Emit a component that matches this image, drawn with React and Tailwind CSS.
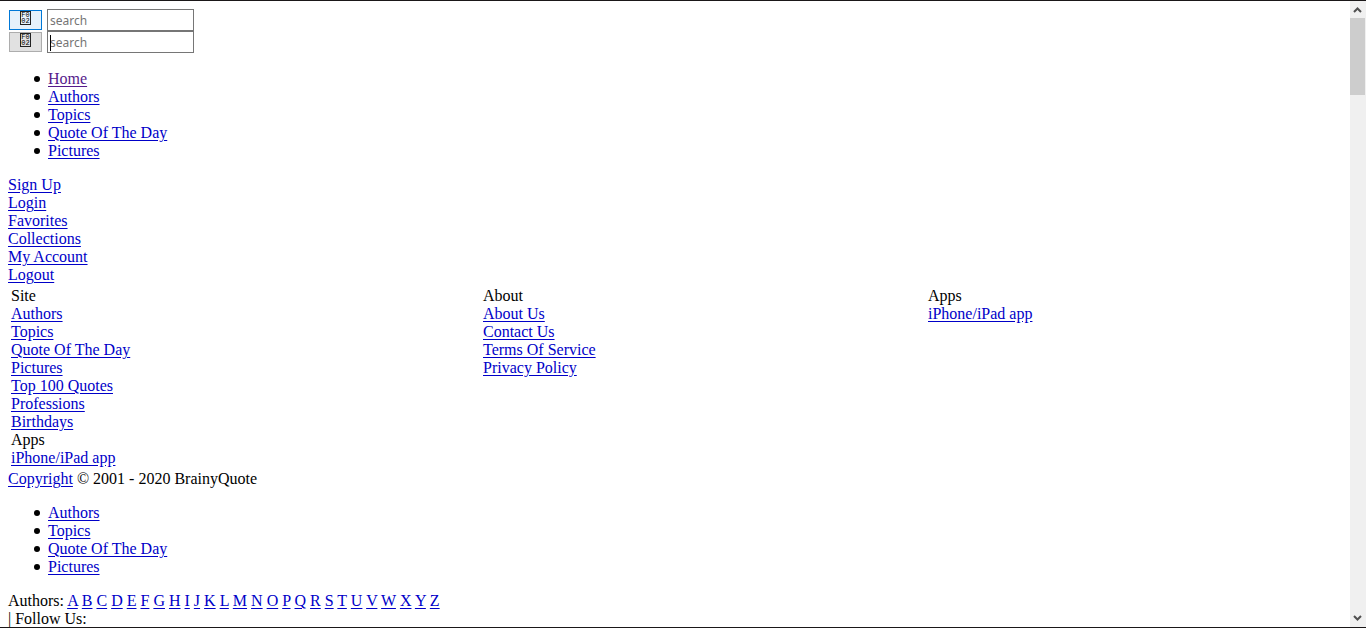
const LINK = "text-[#0000c8] underline underline-offset-2";

function Link({ children, visited }) {
  return (
    <a href="#" className={visited ? "text-[#551a8b] underline underline-offset-2" : LINK}>
      {children}
    </a>
  );
}

function BulletList({ items, visited }) {
  return (
    <ul className="my-4 pl-[26px]">
      {items.map((item) => (
        <li
          key={item}
          className="flex items-center gap-2 before:size-[6px] before:rounded-full before:bg-black before:content-['']"
        >
          <Link visited={item === visited}>{item}</Link>
        </li>
      ))}
    </ul>
  );
}

function LinkLines({ items }) {
  return items.map((item) => (
    <div key={item}>
      <Link>{item}</Link>
    </div>
  ));
}

function MissingGlyph() {
  return (
    <span className="mb-1 flex h-[14px] w-[11px] flex-col items-center justify-center border border-[#222] font-['Liberation_Mono',monospace] text-[7px] leading-[6px] text-black">
      <span>F0</span>
      <span>02</span>
    </span>
  );
}

function SearchRow({ id, active, caret }) {
  return (
    <form className="flex h-[22px] items-center gap-[5px] pl-px" onSubmit={(e) => e.preventDefault()}>
      <button
        type="submit"
        aria-label="Search"
        className={
          active
            ? "flex h-5 w-[33px] items-center justify-center border border-[#0078d7] bg-[#e5f1fb]"
            : "flex h-5 w-[33px] items-center justify-center border border-[#adadad] bg-[#e1e1e1]"
        }
      >
        <MissingGlyph />
      </button>
      <div className="relative">
        <input
          id={id}
          type="text"
          aria-label="search"
          placeholder="search"
          className="block h-[22px] w-[147px] border border-[#767676] bg-white px-0.5 font-['Noto_Sans','Open_Sans',sans-serif] text-[12px] leading-4 outline-none placeholder:text-[#757575]"
        />
        {caret && <span className="absolute top-1 left-[3px] h-4 w-px bg-black" />}
      </div>
    </form>
  );
}

function ScrollBar() {
  return (
    <div className="flex w-4 shrink-0 flex-col bg-[#f0f0f0]" aria-hidden="true">
      <svg className="h-[17px] w-4" viewBox="0 0 16 17" fill="none" stroke="#505050" strokeWidth="2">
        <path d="M4 11 L7.5 7.5 L11 11" />
      </svg>
      <div className="mr-px h-[77px] bg-[#cdcdcd]" />
      <div className="grow" />
      <svg className="h-[17px] w-4" viewBox="0 0 16 17" fill="none" stroke="#505050" strokeWidth="2">
        <path d="M4 6 L7.5 9.5 L11 6" />
      </svg>
    </div>
  );
}

const NAV = ["Authors", "Topics", "Quote Of The Day", "Pictures"];
const ACCOUNT = ["Sign Up", "Login", "Favorites", "Collections", "My Account", "Logout"];
const LETTERS = "ABCDEFGHIJKLMNOPQRSTUVWXYZ".split("");

export default function App() {
  return (
    <div className="flex h-screen overflow-hidden border-y border-[#1a1718] bg-white font-['Liberation_Serif',serif] text-[16px] leading-[18px] text-black">
      <main className="min-w-0 grow overflow-hidden p-2">
        <SearchRow id="search-top" active />
        <SearchRow id="search-menu" caret />
        <nav className="pt-px">
          <BulletList items={["Home", ...NAV]} visited="Home" />
        </nav>
        <nav>
          <LinkLines items={ACCOUNT} />
        </nav>
        <footer>
          <div className="grid grid-cols-[472fr_445fr_414fr] py-[3px] pl-[3px]">
            <section>
              <div>Site</div>
              <LinkLines items={[...NAV, "Top 100 Quotes", "Professions", "Birthdays"]} />
              <div>Apps</div>
              <LinkLines items={["iPhone/iPad app"]} />
            </section>
            <section>
              <div>About</div>
              <LinkLines items={["About Us", "Contact Us", "Terms Of Service", "Privacy Policy"]} />
            </section>
            <section>
              <div>Apps</div>
              <LinkLines items={["iPhone/iPad app"]} />
            </section>
          </div>
          <div>
            <Link>Copyright</Link> © 2001 - 2020 BrainyQuote
          </div>
        </footer>
        <BulletList items={NAV} />
        <div>
          Authors:{" "}
          {LETTERS.map((letter) => (
            <span key={letter}>
              <Link>{letter}</Link>{" "}
            </span>
          ))}
        </div>
        <div>| Follow Us:</div>
      </main>
      <ScrollBar />
    </div>
  );
}
